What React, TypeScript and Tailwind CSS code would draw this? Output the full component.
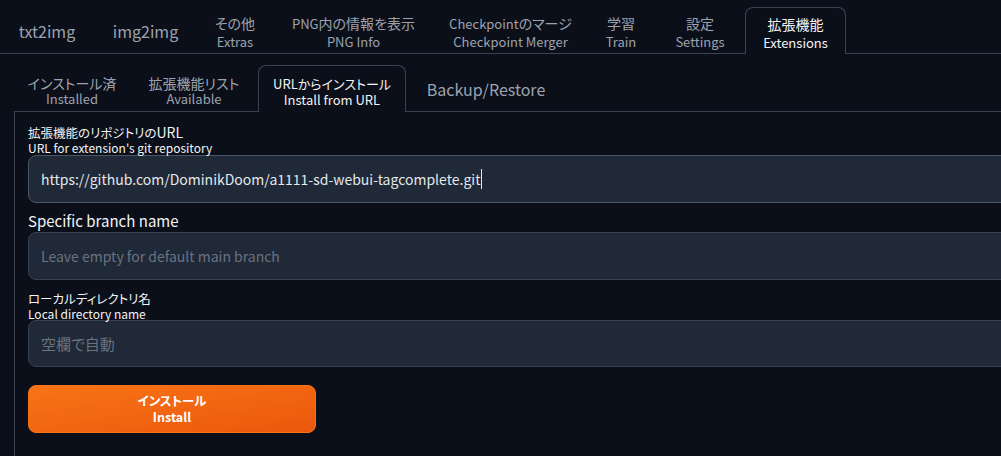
import React from "react";

const font = "font-['Noto_Sans_CJK_JP','Noto_Sans',sans-serif] [font-feature-settings:'palt']";

function Mixed({ text, latin, cjk }: { text: string; latin: string; cjk: string }) {
  const runs = text.match(/[\x00-\x7F]+|[^\x00-\x7F]+/g) || [];
  return (
    <>
      {runs.map((r, i) => (
        <span key={i} className={/^[\x00-\x7F]+$/.test(r) ? latin : cjk}>
          {r}
        </span>
      ))}
    </>
  );
}

type Tab = { a: string; b?: string; w: string };

const topTabs: Tab[] = [
  { a: "txt2img", w: "w-[94px]" },
  { a: "img2img", w: "w-[103px]" },
  { a: "その他", b: "Extras", w: "w-[76px]" },
  { a: "PNG内の情報を表示", b: "PNG Info", w: "w-[161px]" },
  { a: "Checkpointのマージ", b: "Checkpoint Merger", w: "w-[153px]" },
  { a: "学習", b: "Train", w: "w-[68px]" },
  { a: "設定", b: "Settings", w: "w-[90px]" },
  { a: "拡張機能", b: "Extensions", w: "w-[101px]" },
];

const subTabs: Tab[] = [
  { a: "インストール済", b: "Installed", w: "w-[116px]" },
  { a: "拡張機能リスト", b: "Available", w: "w-[128px]" },
  { a: "URLからインストール", b: "Install from URL", w: "w-[148px]" },
  { a: "Backup/Restore", w: "w-[160px]" },
];

function TabButton({ t, active, sub }: { t: Tab; active: boolean; sub?: boolean }) {
  return (
    <div
      className={
        "flex h-[46px] shrink-0 flex-col items-center justify-center text-center " +
        t.w +
        (sub ? " pt-[7px]" : " pt-[5px]") +
        (active
          ? " relative -mb-px h-[47px] rounded-t-lg border border-b-0 border-[#3b4252] bg-[#0b0f19] text-[#f3f4f6]"
          : " text-[#9ca3af]")
      }
    >
      {t.b ? (
        <>
          <span
            className={
              "flex items-baseline justify-center whitespace-nowrap leading-none " +
              (sub ? "h-[15px]" : "h-[17px]")
            }
          >
            <Mixed
              text={t.a}
              latin="text-[13px]"
              cjk={sub && active ? "text-[13px]" : "text-[14px]"}
            />
          </span>
          <span className={"whitespace-nowrap text-[13px] " + (sub ? "leading-[16px]" : "leading-[17px]")}>
            {t.b}
          </span>
        </>
      ) : (
        <span className={"whitespace-nowrap text-[16px] leading-[20px] " + (sub ? "-mt-[6px]" : "-mt-[4px]")}>
          {t.a}
        </span>
      )}
    </div>
  );
}

export default function App() {
  return (
    <div className={"h-[456px] w-full overflow-hidden bg-[#0b0f19] " + font}>
      <div className="flex border-b border-[#3b4252] pt-[7px]">
        {topTabs.map((t, i) => (
          <TabButton key={i} t={t} active={i === 7} />
        ))}
      </div>

      <div className="mt-[11px] pl-[14px]">
        <div className="flex border-b border-[#3b4252]">
          {subTabs.map((t, i) => (
            <TabButton key={i} t={t} active={i === 2} sub />
          ))}
        </div>

        <div className="-mr-[60px] h-[344px] border-l border-[#3b4252] pl-[13px] pt-[13px]">
          <div className="text-[#f3f4f6]">
            <div className="flex h-[16px] items-baseline whitespace-nowrap leading-none">
              <Mixed text="拡張機能のリポジトリのURL" latin="text-[14px]" cjk="text-[12.5px]" />
            </div>
            <div className="h-[14px] text-[12px] leading-[14px]">URL for extension's git repository</div>
          </div>
          <div className="flex h-[48px] items-center rounded-lg border-[1.5px] border-[#4b5563] bg-[#1f2937] pl-[12px] text-[14px] text-[#e5e7eb]">
            <span>https://github.com/DominikDoom/a1111-sd-webui-tagcomplete.git</span>
            <span className="ml-px inline-block h-[20px] w-px bg-[#e5e7eb]" />
          </div>

          <div className="mt-[8px] h-[20px] text-[15px] leading-[20px] text-[#f3f4f6]">Specific branch name</div>
          <input
            readOnly
            placeholder="Leave empty for default main branch"
            className="mt-px block h-[48px] w-full rounded-lg border border-[#374151] bg-[#1f2937] pl-[12px] text-[14px] text-[#e5e7eb] outline-none placeholder:text-[#6b7280]"
          />

          <div className="mt-[11px] text-[#f3f4f6]">
            <div className="h-[16px] text-[12.5px] leading-[16px]">ローカルディレクトリ名</div>
            <div className="h-[13px] text-[12px] leading-[13px]">Local directory name</div>
          </div>
          <input
            readOnly
            placeholder="空欄で自動"
            className="block h-[47px] w-full rounded-lg border border-[#374151] bg-[#1f2937] pl-[12px] text-[15px] text-[#e5e7eb] outline-none placeholder:text-[#6b7280]"
          />

          <button className="mt-[18px] flex h-[48px] w-[288px] flex-col items-center justify-center rounded-lg border border-[#f97316] bg-gradient-to-br from-[#f97316] to-[#ea580c] pb-[2px] font-bold text-white">
            <span className="text-[12.5px] leading-[16px]">インストール</span>
            <span className="text-[12.5px] leading-[15px]">Install</span>
          </button>
        </div>
      </div>
    </div>
  );
}
